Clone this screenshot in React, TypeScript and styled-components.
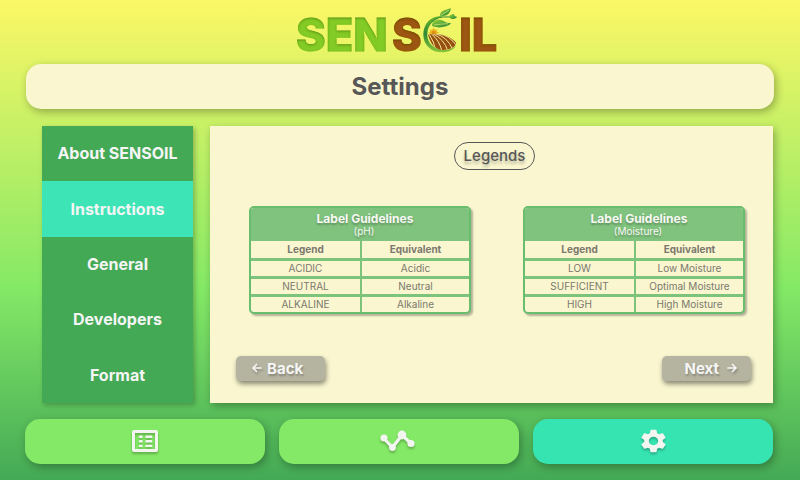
import React, { useState } from "react";
import styled, { createGlobalStyle } from "styled-components";
import { MdSettings } from "react-icons/md";

const GlobalStyle = createGlobalStyle`
  *, *::before, *::after { box-sizing: border-box; }
  body {
    margin: 0;
    font-family: Inter, "Liberation Sans", sans-serif;
    background: #44a955;
  }
  button { font-family: inherit; border: 0; cursor: pointer; }
`;

const Page = styled.div`
  display: flex;
  flex-direction: column;
  min-height: 100vh;
  padding: 0 26px 16px;
  background: linear-gradient(#fcf766 0%, #84e966 60%, #44a955 100%);
`;

const LogoBar = styled.header`
  display: flex;
  justify-content: center;
  height: 64px;
`;

const LogoArt = styled.svg`
  width: 220px;
  height: 64px;
  overflow: visible;
  font-family: Inter, sans-serif;
  font-size: 45px;
  font-weight: 800;
`;

const TitleBar = styled.h1`
  margin: 0;
  padding: 8px;
  border-radius: 15px;
  background: #f9f6d0;
  color: #575757;
  font-size: 24px;
  line-height: 29px;
  font-weight: 700;
  text-align: center;
  box-shadow: 2px 3px 8px rgba(0, 0, 0, 0.3);
`;

const Main = styled.main`
  display: grid;
  grid-template-columns: 151px 1fr;
  gap: 17px;
  flex: 1;
  margin: 17px 1px 16px 16px;
`;

const Sidebar = styled.nav`
  display: grid;
  grid-auto-rows: 1fr;
  background: #44a955;
  box-shadow: 2px 2px 5px rgba(0, 0, 0, 0.25);
`;

const SideItem = styled.button<{ $active: boolean }>`
  padding: 0 0 1px;
  background: ${(p) => (p.$active ? "#3de4b6" : "#44a955")};
  color: #f5f5f5;
  font-size: 16px;
  font-weight: 700;
`;

const Panel = styled.section`
  display: flex;
  flex-direction: column;
  padding: 16px 22px 22px 26px;
  background: #f9f6d0;
  box-shadow: 2px 3px 8px rgba(0, 0, 0, 0.3);
`;

const Pill = styled.h2`
  align-self: center;
  margin: 0 0 0 2px;
  padding: 3px 9px;
  border: 1px solid #575757;
  border-radius: 14px;
  color: #575757;
  font-size: 15px;
  line-height: 20px;
  font-weight: 500;
  text-shadow: 0 3px 3px rgba(0, 0, 0, 0.25);
`;

const Tables = styled.div`
  display: grid;
  grid-template-columns: 1fr 1fr;
  gap: 52px;
  margin: 36px 6px 0 13px;
`;

const Guide = styled.table`
  width: 100%;
  table-layout: fixed;
  border: 2px solid #68bd6e;
  border-radius: 5px;
  border-collapse: separate;
  border-spacing: 0;
  overflow: hidden;
  background: #f9f6d0;
  color: #7b796d;
  font-size: 10px;
  line-height: 12px;
  text-align: center;
  box-shadow: 2px 2px 2px rgba(0, 0, 0, 0.28);

  tbody td {
    height: 18px;
    padding: 0 0 2px;
    border-top: 3px solid #7cc47c;
  }
  tr > :nth-child(2) { border-left: 2px solid #7cc47c; }
`;

const GuideHead = styled.th`
  height: 33px;
  padding: 0;
  background: #80c37e;
  color: #f8f8f4;
  font-weight: 400;
  text-shadow: 0 2px 2px rgba(0, 0, 0, 0.25);
`;

const GuideTitle = styled.strong`
  display: block;
  padding-left: 10px;
  font-size: 12px;
  line-height: 14px;
  font-weight: 700;
`;

const GuideUnit = styled.span`
  display: block;
  padding-left: 8px;
  line-height: 11px;
`;

const ColumnHead = styled.th`
  height: 17px;
  padding: 0 0 2px;
  font-weight: 700;
`;

const Pager = styled.div`
  display: flex;
  justify-content: space-between;
  margin-top: auto;
`;

const PageButton = styled.button<{ $forward?: boolean }>`
  display: flex;
  align-items: center;
  flex-direction: ${(p) => (p.$forward ? "row-reverse" : "row")};
  gap: ${(p) => (p.$forward ? 8 : 5)}px;
  width: 89px;
  height: 25px;
  padding: 0 14px 1px 16px;
  border-radius: 5px;
  background: #b5b4a1;
  color: #f5f5f5;
  font-size: 15px;
  font-weight: 700;
  text-shadow: 1px 2px 2px rgba(0, 0, 0, 0.25);
  box-shadow: 1px 3px 5px rgba(0, 0, 0, 0.45);

  svg { filter: drop-shadow(1px 2px 1px rgba(0, 0, 0, 0.25)); }
`;

const TabBar = styled.nav`
  display: grid;
  grid-template-columns: repeat(3, 1fr);
  gap: 14px;
  margin: 0 1px 0 -1px;
`;

const Tab = styled.button<{ $active: boolean }>`
  display: flex;
  align-items: center;
  justify-content: center;
  height: 45px;
  padding: 0 0 1px;
  border-radius: 15px;
  background: ${(p) => (p.$active ? "#36e4b2" : "#84e966")};
  color: #f3f5f1;
  box-shadow: 2px 3px 8px rgba(0, 0, 0, 0.3);

  svg { filter: drop-shadow(0 2px 1px rgba(0, 0, 0, 0.25)); }
`;

const GearIcon = styled(MdSettings)`
  width: 31px;
  height: 28px;
`;

function Logo() {
  return (
    <LogoArt viewBox="0 0 220 64" role="img" aria-label="SENSOIL">
      <defs>
        <filter id="inset" x="-5%" y="-5%" width="110%" height="110%">
          <feOffset in="SourceAlpha" dx="0" dy="1" result="moved" />
          <feGaussianBlur in="moved" stdDeviation="1.2" result="soft" />
          <feComposite in="SourceAlpha" in2="soft" operator="out" result="edge" />
          <feFlood floodColor="#1c3a08" floodOpacity="0.6" />
          <feComposite in2="edge" operator="in" result="shade" />
          <feMerge>
            <feMergeNode in="SourceGraphic" />
            <feMergeNode in="shade" />
          </feMerge>
        </filter>
        <linearGradient id="ring" x1="0" y1="0" x2="0" y2="1">
          <stop offset="0" stopColor="#6db52c" />
          <stop offset="0.5" stopColor="#2f8a35" />
          <stop offset="1" stopColor="#8cc63a" />
        </linearGradient>
        <linearGradient id="leaf" x1="0" y1="0" x2="1" y2="1">
          <stop offset="0" stopColor="#9bd53a" />
          <stop offset="1" stopColor="#22803a" />
        </linearGradient>
        <clipPath id="field">
          <path d="M54 104 Q72 98 96 104 Q128 112 139 130 Q132 150 98 150 Q66 148 54 104Z" />
        </clipPath>
      </defs>
      <g filter="url(#inset)" strokeWidth="1">
        <text x="6" y="51" fill="#83cb26" stroke="#83cb26">SEN</text>
        <text x="102" y="51" fill="#9c5713" stroke="#9c5713">S</text>
        <text x="169" y="51" fill="#9c5713" stroke="#9c5713">IL</text>
      </g>
      <g transform="translate(120 0) scale(0.3333)">
        <path d="M100 48 C62 45 40 72 40 104 C40 137 67 158 98 157 C116 156 130 149 138 137 C122 150 105 153 88 148 C62 141 50 121 52 99 C54 75 73 56 100 48Z" fill="url(#ring)" />
        <g fill="#f0b51f">
          <circle cx="71" cy="98" r="10" />
          <path d="M71 82 l3 8 h-6z M59 87 l8 5 -5 4z M83 87 l-3 9 -5-4z M54 98 l9-3 v6z M89 98 l-9-3 v6z" />
        </g>
        <circle cx="71" cy="98" r="6" fill="#d99018" />
        <g clipPath="url(#field)">
          <rect x="50" y="96" width="92" height="58" fill="#96500f" />
          <g fill="none" stroke="#f2e8a0" strokeWidth="3">
            <path d="M58 104 Q72 124 78 154" />
            <path d="M64 102 Q88 120 96 154" />
            <path d="M68 101 Q102 116 114 154" />
            <path d="M74 100 Q112 110 128 148" />
            <path d="M84 101 Q120 106 140 138" />
          </g>
        </g>
        <g fill="url(#leaf)">
          <path d="M66 78 C66 62 82 54 97 61 C106 66 112 70 124 70 C112 82 84 86 66 78Z" />
          <path d="M90 47 C91 32 105 30 123 25 C120 42 108 52 90 47Z" />
          <path d="M117 52 C118 44 124 44 132 41 C131 47 136 48 142 51 C134 58 125 60 117 52Z" />
        </g>
        <path d="M66 66 Q80 48 118 51" fill="none" stroke="#2c8a35" strokeWidth="3" />
        <path d="M73 75 Q92 72 114 71 M93 46 L117 30" fill="none" stroke="#d8ee7a" strokeWidth="2" />
      </g>
    </LogoArt>
  );
}

function Arrow({ forward }: { forward?: boolean }) {
  return (
    <svg width="10" height="10" viewBox="0 0 10 10" fill="none" stroke="currentColor" strokeWidth="1.7" strokeLinecap="round" strokeLinejoin="round" aria-hidden="true">
      <path d={forward ? "M1 5H9M5.5 1.5L9 5L5.5 8.5" : "M9 5H1M4.5 1.5L1 5L4.5 8.5"} />
    </svg>
  );
}

function ListIcon() {
  return (
    <svg width="26" height="22" viewBox="0 0 26 22" fill="none" stroke="currentColor" aria-hidden="true">
      <rect x="1.5" y="1.5" width="23" height="19" rx="0.5" strokeWidth="3" />
      <g strokeWidth="2.4" strokeLinecap="round">
        <path d="M8 6.7h1.6M8 11.2h1.6M8 15.9h1.6M14.4 6.7h4.8M14.4 11.2h4.8M14.4 15.9h4.8" />
      </g>
    </svg>
  );
}

function ChartIcon() {
  return (
    <svg width="43" height="22" viewBox="0 0 43 22" fill="currentColor" aria-hidden="true">
      <path d="M6 8.5L14.5 17.5L24 5L33 13.5" fill="none" stroke="currentColor" strokeWidth="3.2" />
      <circle cx="6" cy="8" r="3.6" />
      <circle cx="14.5" cy="17.5" r="3.4" />
      <circle cx="24" cy="5" r="4.4" />
      <circle cx="33" cy="13.5" r="3.6" />
    </svg>
  );
}

type GuideData = { unit: string; rows: [string, string][] };

const guides: GuideData[] = [
  { unit: "(pH)", rows: [["ACIDIC", "Acidic"], ["NEUTRAL", "Neutral"], ["ALKALINE", "Alkaline"]] },
  { unit: "(Moisture)", rows: [["LOW", "Low Moisture"], ["SUFFICIENT", "Optimal Moisture"], ["HIGH", "High Moisture"]] },
];

function GuideTable({ unit, rows }: GuideData) {
  return (
    <Guide>
      <thead>
        <tr>
          <GuideHead colSpan={2}>
            <GuideTitle>Label Guidelines</GuideTitle>
            <GuideUnit>{unit}</GuideUnit>
          </GuideHead>
        </tr>
        <tr>
          <ColumnHead scope="col">Legend</ColumnHead>
          <ColumnHead scope="col">Equivalent</ColumnHead>
        </tr>
      </thead>
      <tbody>
        {rows.map(([legend, equivalent]) => (
          <tr key={legend}>
            <td>{legend}</td>
            <td>{equivalent}</td>
          </tr>
        ))}
      </tbody>
    </Guide>
  );
}

const sections = ["About SENSOIL", "Instructions", "General", "Developers", "Format"];

const tabs = [
  { label: "Records", icon: <ListIcon /> },
  { label: "Charts", icon: <ChartIcon /> },
  { label: "Settings", icon: <GearIcon preserveAspectRatio="none" /> },
];

export default function App() {
  const [section, setSection] = useState("Instructions");
  const [tab, setTab] = useState("Settings");

  return (
    <>
      <GlobalStyle />
      <Page>
        <LogoBar>
          <Logo />
        </LogoBar>
        <TitleBar>Settings</TitleBar>
        <Main>
          <Sidebar aria-label="Settings sections">
            {sections.map((name) => (
              <SideItem key={name} $active={name === section} onClick={() => setSection(name)}>
                {name}
              </SideItem>
            ))}
          </Sidebar>
          <Panel>
            <Pill>Legends</Pill>
            <Tables>
              {guides.map((guide) => (
                <GuideTable key={guide.unit} {...guide} />
              ))}
            </Tables>
            <Pager>
              <PageButton>
                <Arrow />
                Back
              </PageButton>
              <PageButton $forward>
                <Arrow forward />
                Next
              </PageButton>
            </Pager>
          </Panel>
        </Main>
        <TabBar aria-label="Main">
          {tabs.map(({ label, icon }) => (
            <Tab key={label} aria-label={label} $active={label === tab} onClick={() => setTab(label)}>
              {icon}
            </Tab>
          ))}
        </TabBar>
      </Page>
    </>
  );
}
